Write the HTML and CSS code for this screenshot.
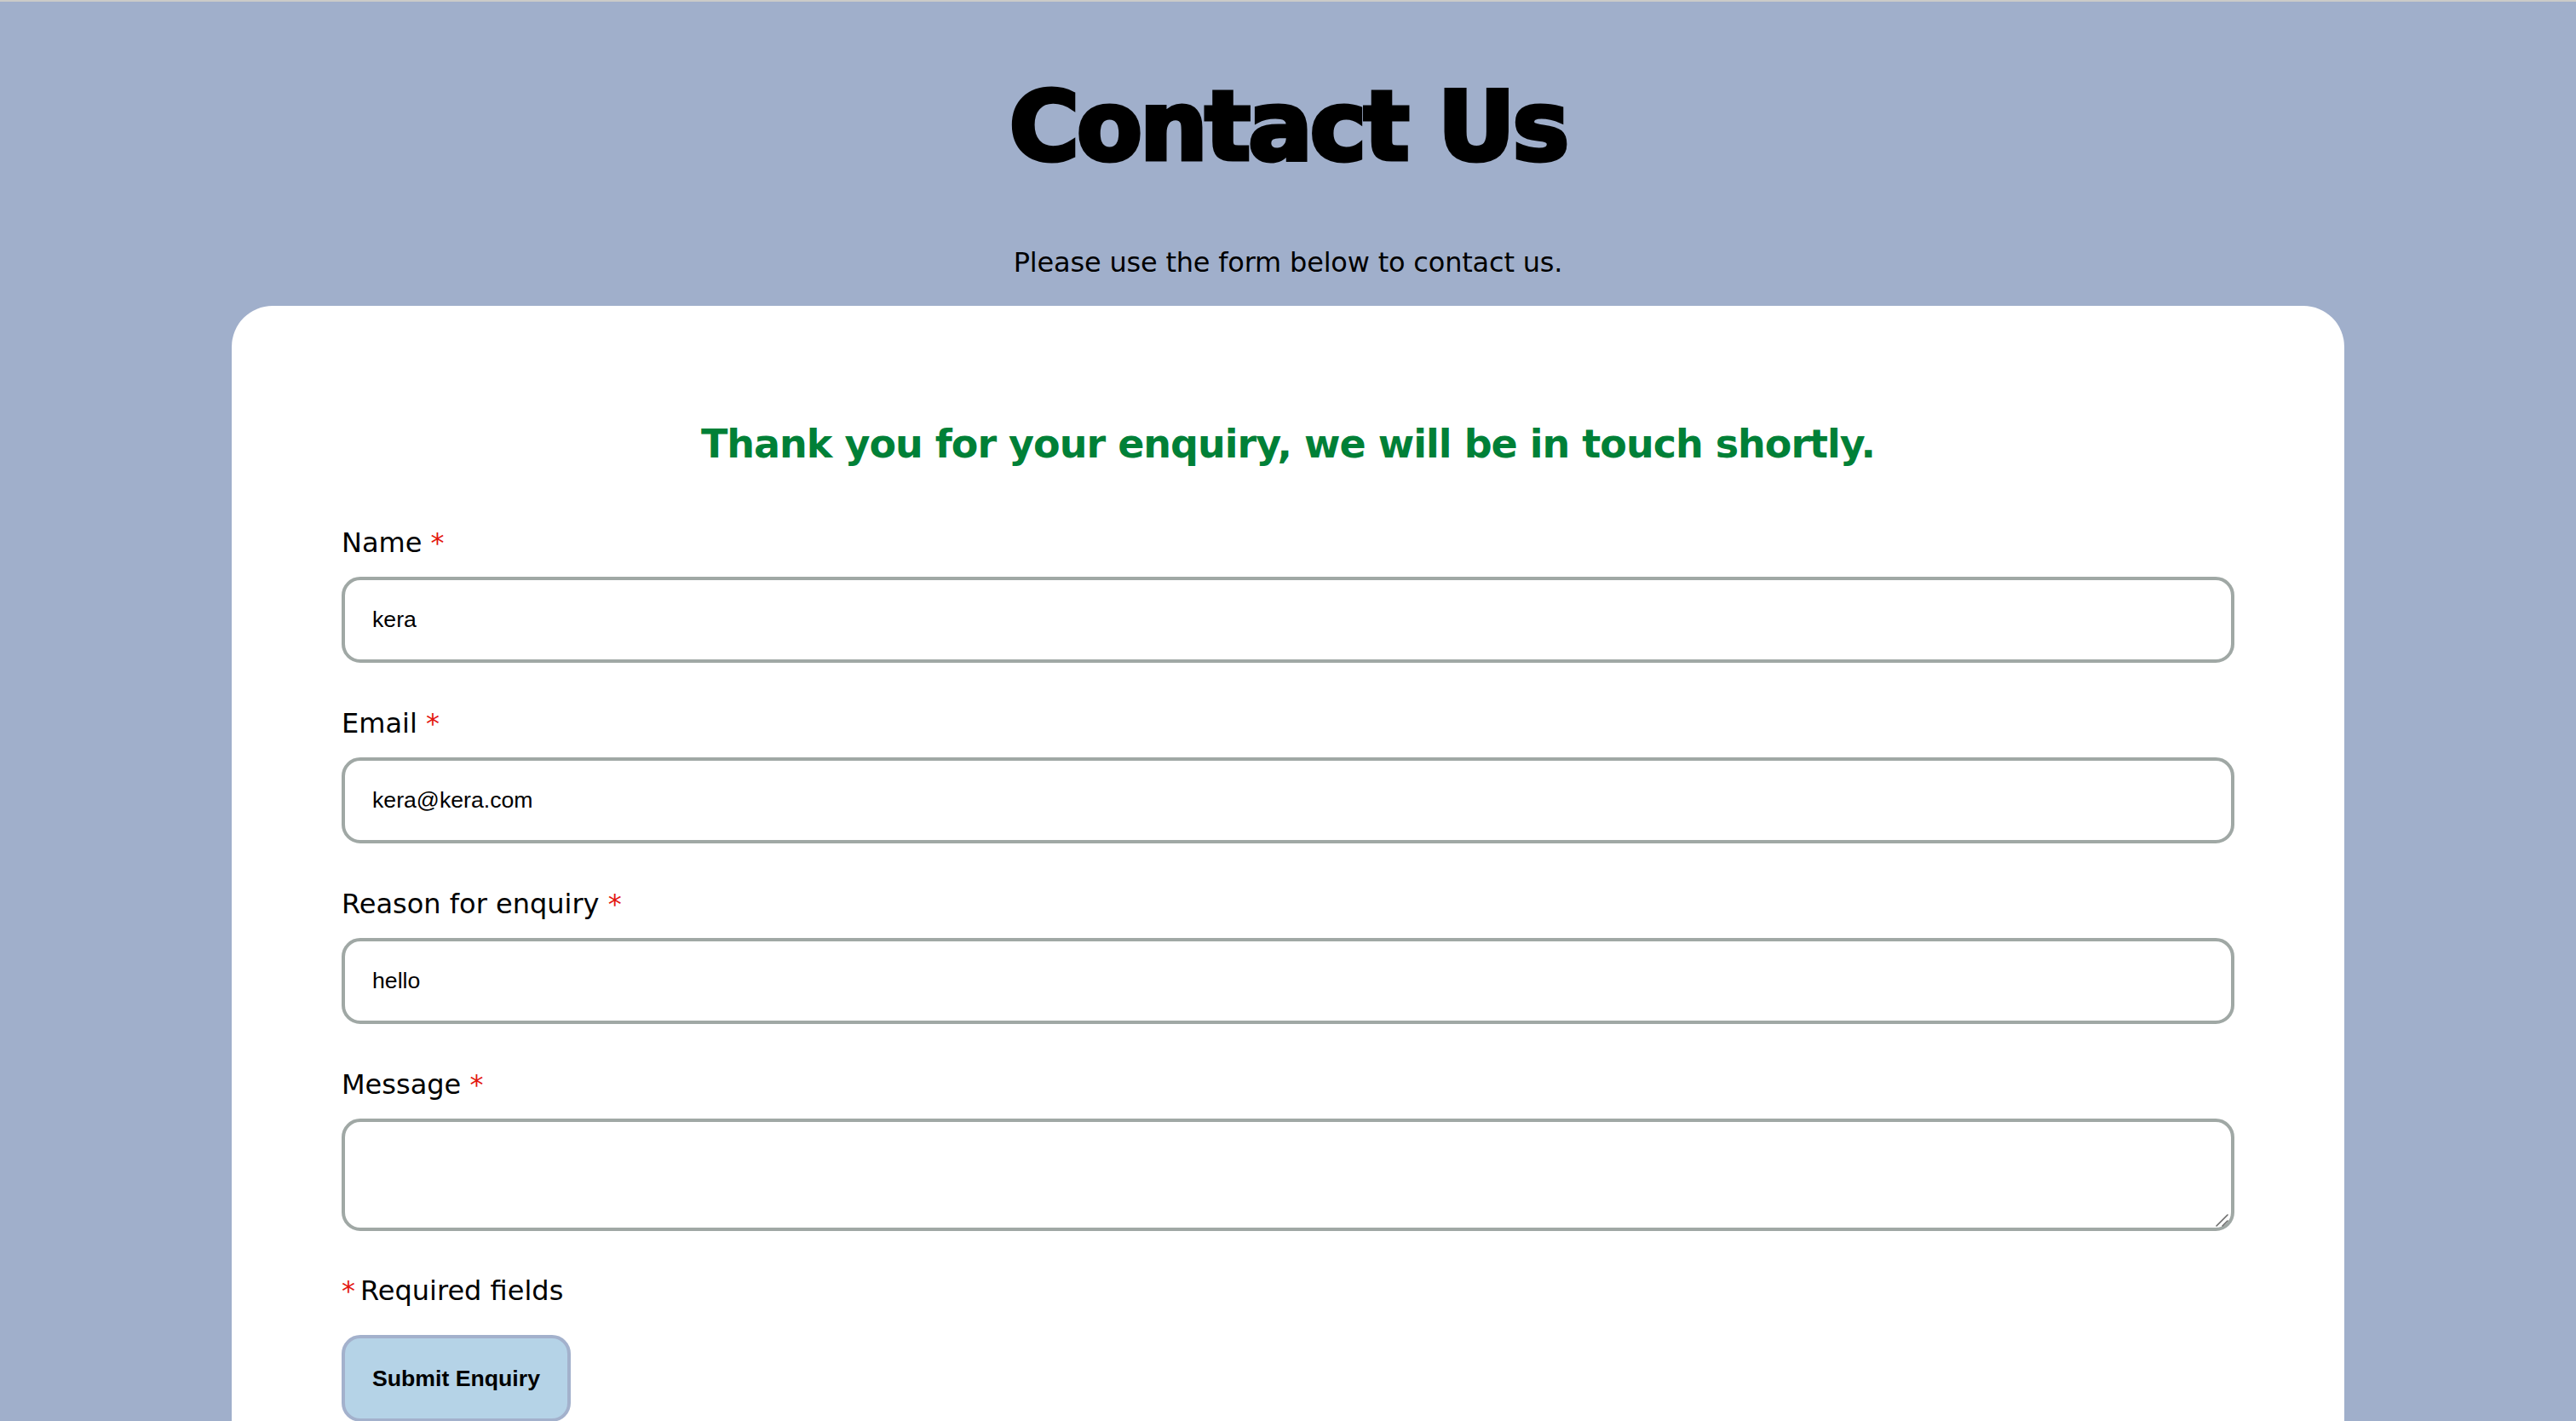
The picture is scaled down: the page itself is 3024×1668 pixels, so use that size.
FILE: index.html
```html
<!DOCTYPE html>
<html lang="en">
<head>
<meta charset="utf-8">
<title>Contact Us</title>
<link rel="stylesheet" href="styles.css">
</head>
<body>
<main class="page">
  <header class="intro">
    <h1 class="title">Contact Us</h1>
    <p class="lead">Please use the form below to contact us.</p>
  </header>
  <section class="card">
    <p class="success">Thank you for your enquiry, we will be in touch shortly.</p>
    <form class="form">
      <div class="field">
        <label class="label" for="name">Name <span class="req">*</span></label>
        <input class="input" id="name" type="text" value="kera">
      </div>
      <div class="field">
        <label class="label" for="email">Email <span class="req">*</span></label>
        <input class="input" id="email" type="email" value="kera@kera.com">
      </div>
      <div class="field">
        <label class="label" for="reason">Reason for enquiry <span class="req">*</span></label>
        <input class="input" id="reason" type="text" value="hello">
      </div>
      <div class="field field-last">
        <label class="label" for="message">Message <span class="req">*</span></label>
        <div class="textarea-wrap">
          <textarea class="input textarea" id="message"></textarea>
          <svg class="grip" width="16" height="16" viewBox="0 0 16 16" aria-hidden="true">
            <path d="M2 15 L15 2" stroke="#6b6b6b" stroke-width="1.6" stroke-linecap="round"/>
            <path d="M9 15 L15 9" stroke="#6b6b6b" stroke-width="1.6" stroke-linecap="round"/>
          </svg>
        </div>
      </div>
      <p class="note"><span class="req note-req">*</span>Required fields</p>
      <button class="submit" type="button">Submit Enquiry</button>
    </form>
  </section>
</main>
</body>
</html>
```
FILE: styles.css
```css
* {
  box-sizing: border-box;
}

html, body {
  margin: 0;
  padding: 0;
}

body {
  background: #a0afcb;
  border-top: 2px solid #cbcbc8;
  font-family: "DejaVu Sans", "Noto Sans", sans-serif;
  color: #000;
  overflow: hidden;
}

.page {
  display: flex;
  flex-direction: column;
  align-items: center;
  padding-top: 79px;
}

.intro {
  display: flex;
  flex-direction: column;
  align-items: center;
}

.title {
  margin: 0;
  font-family: "DejaVu Sans", sans-serif;
  font-weight: 700;
  font-size: 112px;
  line-height: 134px;
  letter-spacing: -3px;
  -webkit-text-stroke: 5px #000;
  color: #000;
}

.lead {
  margin: 73px 0 31px;
  font-size: 32px;
  line-height: 40px;
  letter-spacing: -0.2px;
}

.card {
  width: 2480px;
  background: #fff;
  border-radius: 48px 48px 0 0;
  padding: 134px 129px 120px;
}

.success {
  margin: 0 0 68px;
  text-align: center;
  color: #008037;
  font-weight: 700;
  font-size: 46px;
  line-height: 56px;
  letter-spacing: -1px;
}

.form {
  display: flex;
  flex-direction: column;
  align-items: flex-start;
}

.field {
  width: 100%;
  display: flex;
  flex-direction: column;
  margin-bottom: 51px;
}

.field-last {
  margin-bottom: 50px;
}

.label {
  display: block;
  font-size: 32px;
  line-height: 40px;
  margin-bottom: 20px;
}

.req {
  color: #e3160f;
}

.note-req {
  margin-right: 6px;
}

.input {
  width: 100%;
  height: 101px;
  margin: 0;
  padding: 0 32px;
  border: 4px solid #a0a8a5;
  border-radius: 22px;
  background: #fff;
  font-family: "Liberation Sans", Arial, sans-serif;
  font-size: 26.67px;
  color: #000;
  outline: none;
}

.textarea-wrap {
  position: relative;
  width: 100%;
}

.textarea {
  height: 132px;
  padding: 32px;
  resize: none;
  display: block;
}

.grip {
  position: absolute;
  right: 7px;
  bottom: 5px;
}

.note {
  margin: 0 0 32px;
  font-size: 32px;
  line-height: 40px;
}

.submit {
  height: 102px;
  padding: 0 32px;
  border: 4px solid #a3b1cc;
  border-radius: 22px;
  background: #b5d3e7;
  font-family: "Liberation Sans", Arial, sans-serif;
  font-weight: 700;
  font-size: 26.67px;
  color: #000;
}
```
